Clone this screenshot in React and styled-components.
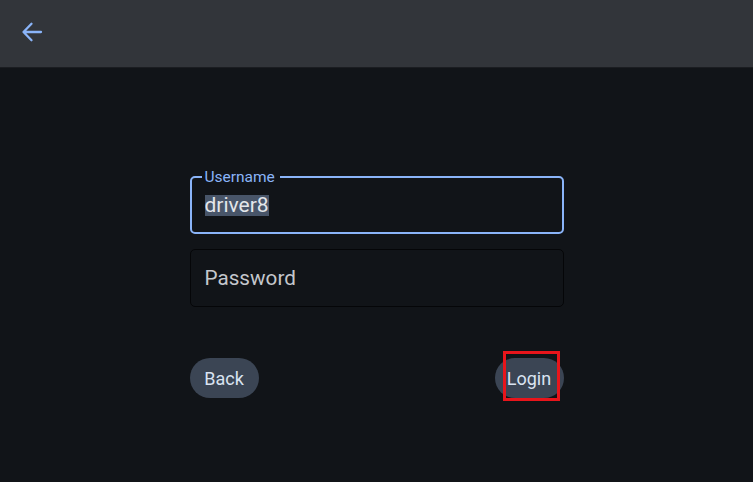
import React from "react";
import styled, { createGlobalStyle } from "styled-components";

const Global = createGlobalStyle`
  html, body { margin: 0; padding: 0; background: #111418; }
  body { font-family: Roboto, "Noto Sans", sans-serif; }
  #root { min-height: 482px; }
`;

const Page = styled.div`
  width: 753px;
  height: 482px;
  display: flex;
  flex-direction: column;
  background: #111418;
  overflow: hidden;
`;

const Header = styled.header`
  height: 67px;
  flex: none;
  background: #32353a;
  display: flex;
  align-items: center;
  padding-left: 18px;
  box-shadow: 0 1px 0 #1b1d21;
`;

const IconButton = styled.button`
  width: 28px;
  height: 28px;
  padding: 0;
  margin-top: -3px;
  border: none;
  background: transparent;
  display: flex;
  align-items: center;
  justify-content: center;
  cursor: pointer;
`;

const Main = styled.main`
  flex: 1;
  display: flex;
  justify-content: center;
  padding-top: 109px;
`;

const Form = styled.div`
  width: 374px;
  display: flex;
  flex-direction: column;
`;

const Field = styled.div`
  position: relative;
  height: 58px;
  box-sizing: border-box;
  border-radius: 5px;
  border: ${(p) => (p.$focused ? "2px solid #8ab4f8" : "1px solid #050608")};
  display: flex;
  align-items: center;
  padding-left: ${(p) => (p.$focused ? "13px" : "14px")};
  margin-bottom: ${(p) => p.$mb || 0}px;
`;

const Legend = styled.span`
  position: absolute;
  top: -10px;
  left: 10px;
  padding: 0 5px 0 3px;
  background: #111418;
  color: #8ab4f8;
  font-size: 15.5px;
  line-height: 18px;
`;

const Value = styled.span`
  font-size: 21px;
  line-height: 20px;
  color: #e3e6ea;
  margin-top: 1px;
`;

const Selected = styled.span`
  background: #485569;
  display: inline-block;
  padding-bottom: 1px;
`;

const Placeholder = styled.span`
  font-size: 20.7px;
  color: #c4c7cc;
`;

const Actions = styled.div`
  display: flex;
  justify-content: space-between;
  margin-top: 51px;
`;

const Pill = styled.button`
  position: relative;
  height: 40px;
  min-width: 69px;
  padding: 0 12px;
  border: none;
  border-radius: 20px;
  background: #3b4554;
  color: #d9e3f1;
  font-family: Roboto, "Noto Sans", sans-serif;
  font-size: 18px;
  cursor: pointer;
`;

const Highlight = styled.span`
  position: absolute;
  left: 8px;
  top: -7px;
  width: 57px;
  height: 50px;
  box-sizing: border-box;
  border: 3px solid #e8151b;
  pointer-events: none;
`;

export default function App() {
  return (
    <>
      <Global />
      <Page>
        <Header>
          <IconButton aria-label="Back">
            <svg width="24" height="24" viewBox="0 0 24 24" fill="none">
              <path
                d="M21 12H3.8M11.5 3.8L3.5 12l8 8.2"
                stroke="#8ab4f8"
                strokeWidth="2.3"
                strokeLinecap="round"
                strokeLinejoin="round"
              />
            </svg>
          </IconButton>
        </Header>
        <Main>
          <Form>
            <Field $focused $mb={15}>
              <Legend>Username</Legend>
              <Value>
                <Selected>driver8</Selected>
              </Value>
            </Field>
            <Field>
              <Placeholder>Password</Placeholder>
            </Field>
            <Actions>
              <Pill>Back</Pill>
              <Pill>
                Login
                <Highlight />
              </Pill>
            </Actions>
          </Form>
        </Main>
      </Page>
    </>
  );
}
